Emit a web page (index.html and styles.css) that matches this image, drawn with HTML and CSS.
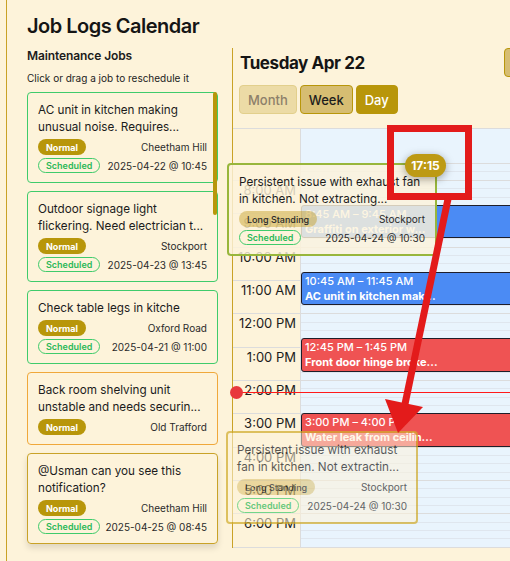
FILE: index.html
```html
<!DOCTYPE html>
<html lang="en">
<head>
<meta charset="utf-8">
<title>Job Logs Calendar</title>
<link rel="stylesheet" href="styles.css">
</head>
<body>
<div class="app">
  <h1 class="title">Job Logs Calendar</h1>
  <div class="main">
    <aside class="sidebar">
      <h2 class="side-title">Maintenance Jobs</h2>
      <p class="hint">Click or drag a job to reschedule it</p>
      <div class="job-list">
        <div class="card card-green">
          <div class="card-text">AC unit in kitchen making unusual noise. Requires...</div>
          <div class="card-row"><span class="badge badge-normal">Normal</span><span class="meta">Cheetham Hill</span></div>
          <div class="card-row"><span class="badge badge-sched">Scheduled</span><span class="meta">2025-04-22 @ 10:45</span></div>
        </div>
        <div class="card card-green">
          <div class="card-text">Outdoor signage light flickering. Need electrician t...</div>
          <div class="card-row"><span class="badge badge-normal">Normal</span><span class="meta">Stockport</span></div>
          <div class="card-row"><span class="badge badge-sched">Scheduled</span><span class="meta">2025-04-23 @ 13:45</span></div>
        </div>
        <div class="card card-green">
          <div class="card-text">Check table legs in kitche</div>
          <div class="card-row"><span class="badge badge-normal">Normal</span><span class="meta">Oxford Road</span></div>
          <div class="card-row"><span class="badge badge-sched">Scheduled</span><span class="meta">2025-04-21 @ 11:00</span></div>
        </div>
        <div class="card card-orange">
          <div class="card-text">Back room shelving unit unstable and needs securin...</div>
          <div class="card-row"><span class="badge badge-normal">Normal</span><span class="meta">Old Trafford</span></div>
        </div>
        <div class="card card-gold">
          <div class="card-text">@Usman can you see this notification?</div>
          <div class="card-row"><span class="badge badge-normal">Normal</span><span class="meta">Cheetham Hill</span></div>
          <div class="card-row"><span class="badge badge-sched">Scheduled</span><span class="meta">2025-04-25 @ 08:45</span></div>
        </div>
        <div class="scroll-thumb"></div>
      </div>
    </aside>

    <section class="calendar">
      <div class="cal-head">
        <div class="cal-title">Tuesday Apr 22</div>
        <button class="nav-btn" aria-label="Today"></button>
      </div>
      <div class="views">
        <button class="view-btn view-month">Month</button>
        <button class="view-btn view-week">Week</button>
        <button class="view-btn view-day">Day</button>
      </div>
      <div class="grid">
        <div class="gutter">
          <div class="grid-head"></div>
          <div class="half"></div>
          <div class="hour"><span class="hour-label">8:00 AM</span></div>
          <div class="hour"><span class="hour-label">9:00 AM</span></div>
          <div class="hour"><span class="hour-label">10:00 AM</span></div>
          <div class="hour"><span class="hour-label">11:00 AM</span></div>
          <div class="hour"><span class="hour-label">12:00 PM</span></div>
          <div class="hour"><span class="hour-label">1:00 PM</span></div>
          <div class="hour"><span class="hour-label">2:00 PM</span></div>
          <div class="hour"><span class="hour-label">3:00 PM</span></div>
          <div class="hour"><span class="hour-label">4:00 PM</span></div>
          <div class="hour"><span class="hour-label">5:00 PM</span></div>
          <div class="hour"><span class="hour-label">6:00 PM</span></div>
        </div>
        <div class="day-col">
          <div class="grid-head"></div>
          <div class="half slot-half"></div>
          <div class="hour slot"></div>
          <div class="hour slot"></div>
          <div class="hour slot"></div>
          <div class="hour slot"></div>
          <div class="hour slot"></div>
          <div class="hour slot"></div>
          <div class="hour slot"></div>
          <div class="hour slot"></div>
          <div class="hour slot"></div>
          <div class="hour slot"></div>
          <div class="hour slot"></div>

          <div class="event event-blue" style="top:76px"><div class="ev-time">8:45 AM – 9:45 AM</div><div class="ev-title">Graffiti on exterior w...</div></div>
          <div class="event event-blue" style="top:142.67px"><div class="ev-time">10:45 AM – 11:45 AM</div><div class="ev-title">AC unit in kitchen mak...</div></div>
          <div class="event event-red" style="top:209.33px"><div class="ev-time">12:45 PM – 1:45 PM</div><div class="ev-title">Front door hinge broke...</div></div>
          <div class="event event-red" style="top:284.33px"><div class="ev-time">3:00 PM – 4:00 PM</div><div class="ev-title">Water leak from ceilin...</div></div>
        </div>
        <div class="now-line" style="top:262.5px"><span class="now-dot"></span></div>
      </div>
    </section>
  </div>

  <div class="ghost ghost-cal">
    <div class="card-text">Persistent issue with exhaust fan in kitchen. Not extracting...</div>
    <div class="card-row"><span class="badge badge-long">Long Standing</span><span class="meta">Stockport</span></div>
    <div class="card-row"><span class="badge badge-sched">Scheduled</span><span class="meta">2025-04-24 @ 10:30</span></div>
  </div>

  <div class="ghost ghost-drag">
    <div class="card-text">Persistent issue with exhaust fan in kitchen. Not extractin...</div>
    <div class="card-row"><span class="badge badge-long">Long Standing</span><span class="meta">Stockport</span></div>
    <div class="card-row"><span class="badge badge-sched">Scheduled</span><span class="meta">2025-04-24 @ 10:30</span></div>
  </div>

  <div class="time-tip">17:15</div>
</div>

<svg class="annot" width="510" height="561" viewBox="0 0 510 561" aria-hidden="true">
  <rect x="390.5" y="128.5" width="78" height="68" fill="none" stroke="#e31b1b" stroke-width="7"/>
  <line x1="448" y1="199" x2="405" y2="404" stroke="#e31b1b" stroke-width="7"/>
  <polygon points="398,433 385,399 423,407" fill="#e31b1b"/>
</svg>
</body>
</html>
```

FILE: styles.css
```css
* { box-sizing: border-box; }

html, body {
  margin: 0;
  height: 100%;
  overflow: hidden;
}

body {
  position: relative;
  background: #fdf3da;
  font-family: Inter, "Noto Sans", sans-serif;
  color: #1c1c1c;
}

.app {
  margin-left: 6px;
  border-left: 1px solid #c9a227;
  height: 561px;
  width: 700px;
  padding-left: 20px;
}

.title {
  margin: 0;
  padding-top: 13px;
  font-size: 20px;
  line-height: 26px;
  font-weight: 600;
  letter-spacing: -0.5px;
  color: #151515;
}

.main {
  display: flex;
  margin-top: 9px;
  height: 500px;
}

/* Sidebar */
.sidebar {
  width: 191px;
  flex: none;
}

.side-title {
  margin: 0;
  font-size: 12px;
  line-height: 16px;
  font-weight: 600;
  letter-spacing: -0.1px;
}

.hint {
  margin: 7px 0 0;
  font-size: 10px;
  line-height: 14px;
  color: #222;
}

.job-list {
  position: relative;
  margin-top: 7px;
  display: flex;
  flex-direction: column;
  gap: 8px;
}

.card {
  border: 1px solid #3fcb6b;
  border-radius: 4px;
  padding: 9px 10px;
}

.card-green { border-color: #3fcb6b; }
.card-orange { border-color: #f0a83a; }
.card-gold {
  border-color: #c9a227;
  box-shadow: 0 4px 6px rgba(0, 0, 0, 0.12);
}

.card-text {
  font-size: 11.7px;
  line-height: 17px;
  color: #1c1c1c;
}

.card-row {
  display: flex;
  align-items: center;
  justify-content: space-between;
  margin-top: 3px;
  white-space: nowrap;
}

.badge {
  display: inline-flex;
  align-items: center;
  height: 15px;
  border-radius: 8px;
  font-size: 9px;
  font-weight: 700;
  padding: 0 8px;
}

.badge-normal {
  height: 16px;
  background: #b8960a;
  color: #fff;
}

.badge-sched {
  border: 1px solid #3fcb6b;
  color: #2cb858;
  font-weight: 600;
  padding: 0 7px;
}

.badge-long {
  height: 16px;
  background: rgba(190, 150, 20, 0.42);
  color: #2a2a2a;
  font-weight: 500;
  padding: 0 8px;
}

.meta {
  font-size: 10px;
  color: #2a2a2a;
}

.scroll-thumb {
  position: absolute;
  top: 0;
  right: 1px;
  width: 4px;
  height: 123px;
  border-radius: 2px;
  background: #b8960a;
}

/* Calendar */
.calendar {
  margin-left: 14px;
  border-left: 1px solid #c9a227;
  width: 320px;
  display: flex;
  flex-direction: column;
}

.cal-head {
  display: flex;
  align-items: center;
  justify-content: space-between;
  height: 29px;
  padding-left: 7px;
}

.cal-title {
  font-size: 17px;
  font-weight: 700;
  letter-spacing: -0.42px;
  color: #151515;
}

.nav-btn {
  width: 48px;
  height: 29px;
  background: #d6bd72;
  border: 1px solid #b8960a;
  border-radius: 4px;
}

.views {
  display: flex;
  gap: 3px;
  margin-top: 8px;
  padding-left: 6px;
}

.view-btn {
  height: 29px;
  padding: 0 8px;
  border-radius: 4px;
  font-family: Inter, "Noto Sans", sans-serif;
  font-size: 13px;
  font-weight: 500;
  border: 1px solid #b8960a;
}

.view-month {
  background: #ecdba6;
  border-color: #e2cf8c;
  color: #8d806a;
}

.view-week {
  background: #d6bd72;
  color: #1c1c1c;
}

.view-day {
  background: #b8960a;
  color: #fff;
}

.grid {
  position: relative;
  margin-top: 14px;
  display: flex;
  border-top: 1px solid #dcdcdc;
  border-bottom: 1px solid #dcdcdc;
}

.gutter {
  width: 68px;
  flex: none;
  border-right: 1px solid #dcdcdc;
}

.grid-head {
  height: 35px;
  border-bottom: 1px solid #dcdcdc;
}

.half { height: 16px; }

.hour {
  height: 33.333px;
  border-top: 1px solid #dcdcdc;
}

.hour-label {
  display: block;
  padding: 2px 4px 0 0;
  text-align: right;
  font-size: 13px;
  line-height: 15px;
  color: #1c1c1c;
}

.day-col {
  position: relative;
  flex: 1;
  background: #e9f4fd;
}

.slot, .slot-half {
  background-image:
    linear-gradient(#dfe6ee, #dfe6ee),
    linear-gradient(#dfe6ee, #dfe6ee),
    linear-gradient(#dfe6ee, #dfe6ee);
  background-size: 100% 1px;
  background-repeat: no-repeat;
  background-position: 0 7.33px, 0 15.67px, 0 24px;
}

.slot-half {
  background-image: linear-gradient(#dfe6ee, #dfe6ee);
  background-position: 0 7.33px;
}

.event {
  position: absolute;
  left: 0;
  right: -6px;
  height: 33.333px;
  border: 1px solid #1e1e2a;
  border-radius: 3px;
  padding: 1px 3px;
  color: #fff;
  font-size: 11px;
  line-height: 15px;
}

.event-blue { background: #4b8bf4; }
.event-red { background: #ef5353; }

.ev-time { font-weight: 500; }
.ev-title { font-weight: 700; }

.now-line {
  position: absolute;
  left: 0;
  right: 0;
  height: 1px;
  background: #ff1a1a;
}

.now-dot {
  position: absolute;
  left: -3px;
  top: -6px;
  width: 13px;
  height: 13px;
  border-radius: 50%;
  background: #e8383c;
}

/* Drag ghosts */
.ghost {
  position: absolute;
  border-radius: 4px;
}

.ghost-cal {
  left: 227px;
  top: 163px;
  width: 210px;
  border: 2px solid #98b63c;
  background: rgba(253, 243, 218, 0.82);
  padding: 9px 10px;
}

.ghost-drag {
  left: 226px;
  top: 431px;
  width: 192px;
  border: 2px solid #d2ad2e;
  background: rgba(253, 243, 218, 0.75);
  opacity: 0.72;
  padding: 9px 9px;
}

.time-tip {
  position: absolute;
  left: 405px;
  top: 154px;
  width: 41px;
  height: 23px;
  border-radius: 12px;
  background: #bd9a14;
  color: #fff;
  font-size: 12px;
  font-weight: 700;
  display: flex;
  align-items: center;
  justify-content: center;
  box-shadow: 0 2px 8px rgba(0, 0, 0, 0.35);
}

.annot {
  position: absolute;
  left: 0;
  top: 0;
  pointer-events: none;
}
```
